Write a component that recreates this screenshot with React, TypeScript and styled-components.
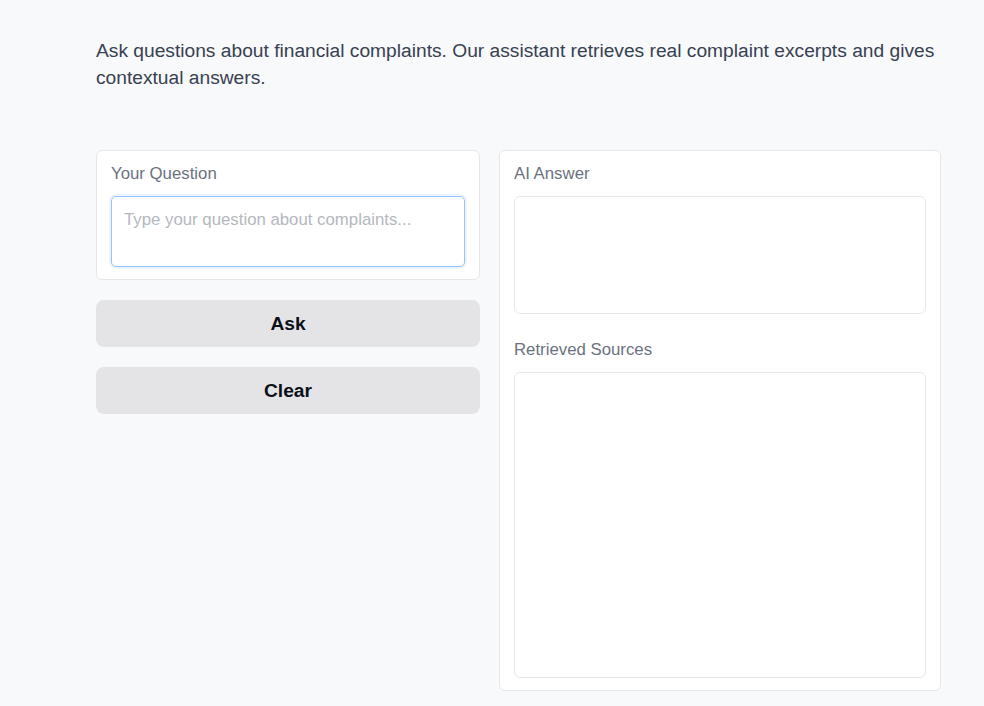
import React from "react";
import styled, { createGlobalStyle } from "styled-components";

const Global = createGlobalStyle`
  html, body {
    margin: 0;
    padding: 0;
    background: #f8f9fa;
    font-family: "Liberation Sans", Arial, sans-serif;
  }
  * { box-sizing: border-box; }
`;

const Page = styled.div`
  padding: 37px 0 0 96px;
  width: 984px;
  min-height: 706px;
`;

const Intro = styled.p`
  margin: 0 0 59px 0;
  width: 846px;
  font-size: 19.2px;
  line-height: 27px;
  color: #374151;
`;

const Columns = styled.div`
  display: grid;
  grid-template-columns: 384px 442px;
  column-gap: 19px;
  align-items: start;
`;

const Stack = styled.div`
  display: flex;
  flex-direction: column;
  gap: 20px;
`;

const Card = styled.div`
  background: #ffffff;
  border: 1px solid #e5e7eb;
  border-radius: 6px;
  padding: 12px 14px 12px 14px;
  display: flex;
  flex-direction: column;
`;

const Label = styled.div<{ $spaced?: boolean }>`
  font-size: 16.8px;
  line-height: 21px;
  color: #6b7280;
  margin-top: ${(p) => (p.$spaced ? "25px" : "0")};
  margin-bottom: 12px;
`;

const Question = styled.textarea`
  display: block;
  width: 100%;
  height: 71px;
  resize: none;
  border: 1px solid #93c5fd;
  border-radius: 5px;
  box-shadow: 0 0 0 2px #eef4ff;
  padding: 12px 12px;
  font-family: "Liberation Sans", Arial, sans-serif;
  font-size: 16.8px;
  line-height: 22px;
  color: #374151;
  background: #fff;
  outline: none;
  &::placeholder { color: #b4b8c0; }
`;

const OutputBox = styled.div<{ $h: number }>`
  height: ${(p) => p.$h}px;
  border: 1px solid #e5e7eb;
  border-radius: 6px;
  background: #fff;
`;

const Button = styled.button`
  height: 47px;
  width: 100%;
  border: none;
  border-radius: 8px;
  background: #e4e4e7;
  color: #0b0f19;
  font-family: "Liberation Sans", Arial, sans-serif;
  font-weight: 700;
  font-size: 19.2px;
  cursor: pointer;
`;

export default function App() {
  return (
    <>
      <Global />
      <Page>
        <Intro>
          Ask questions about financial complaints. Our assistant retrieves real complaint excerpts and gives
          contextual answers.
        </Intro>
        <Columns>
          <Stack>
            <Card>
              <Label>Your Question</Label>
              <Question placeholder="Type your question about complaints..." />
            </Card>
            <Button>Ask</Button>
            <Button>Clear</Button>
          </Stack>
          <Card>
            <Label>AI Answer</Label>
            <OutputBox $h={118} />
            <Label $spaced>Retrieved Sources</Label>
            <OutputBox $h={306} />
          </Card>
        </Columns>
      </Page>
    </>
  );
}
